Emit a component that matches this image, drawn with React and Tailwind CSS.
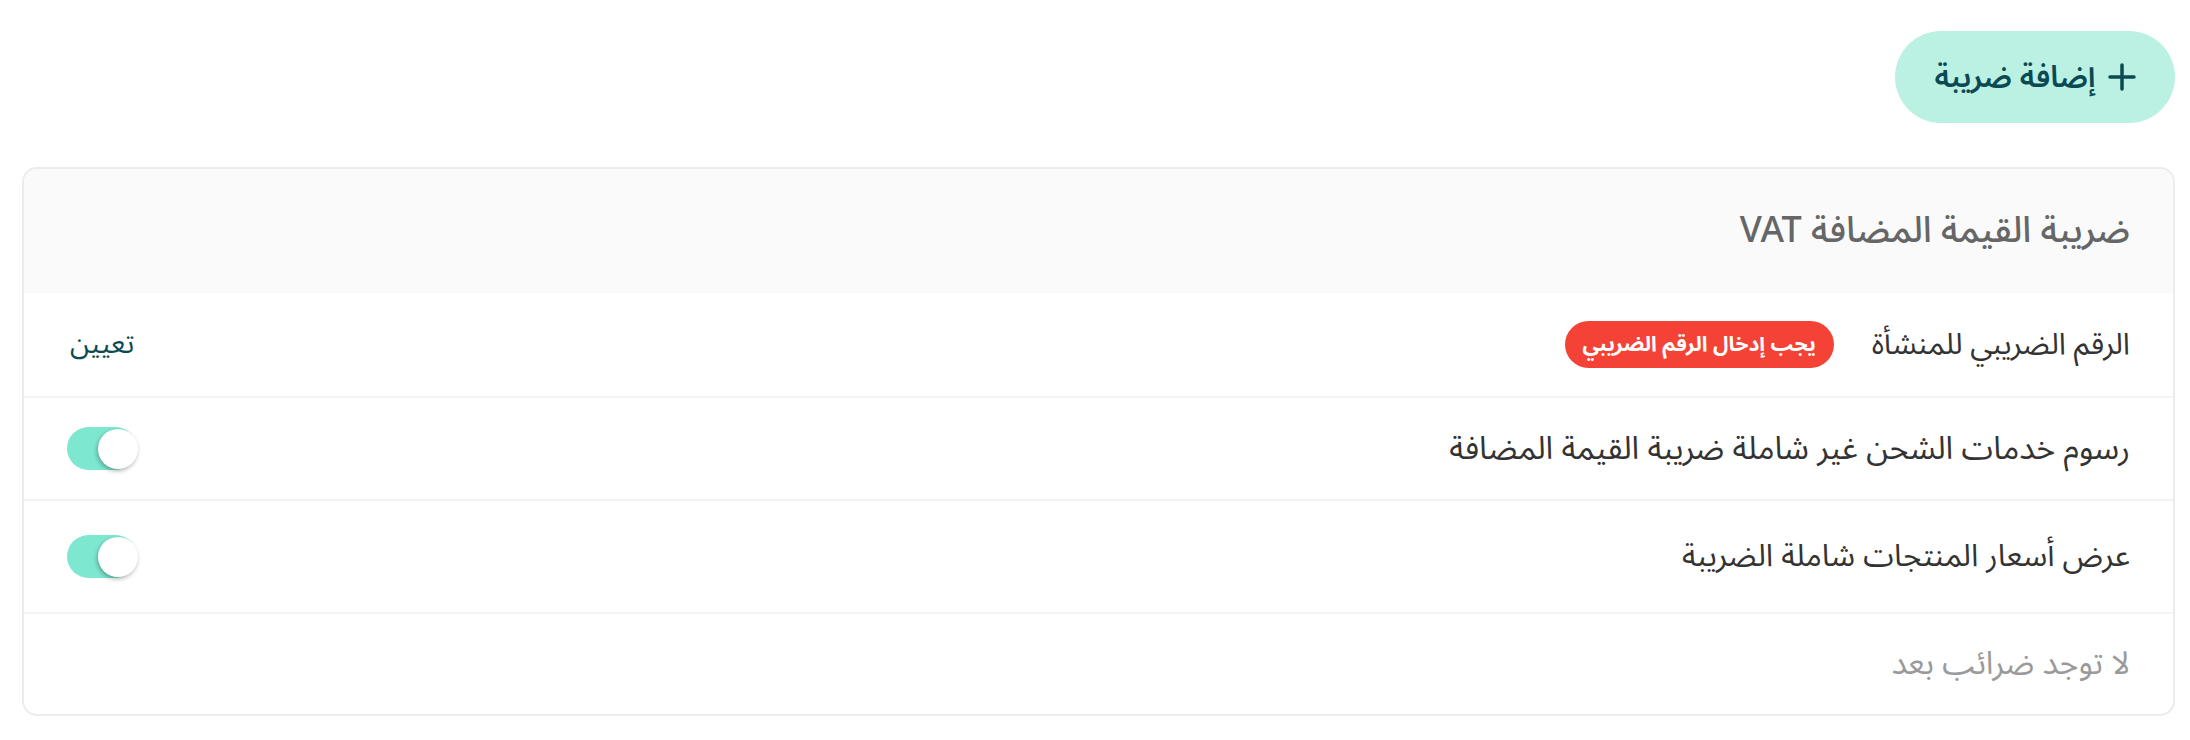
import React from 'react';

const font = { fontFamily: '"Noto Sans Arabic", "DejaVu Sans", "Noto Sans", sans-serif' };

const Toggle = () => (
  <div className="w-[70px] h-[43px] rounded-full bg-[#7de7cf] flex items-center justify-start">
    <span className="block w-[40px] h-[40px] rounded-full bg-white shadow-[-1px_2px_4px_rgba(0,0,0,0.3)] mr-[-1px]" />
  </div>
);

export default function App() {
  return (
    <div dir="rtl" className="bg-white min-h-[740px] pl-[22px] pr-[15px] pt-[31px]" style={font}>
      <div className="flex">
        <button className="h-[92px] w-[280px] rounded-full bg-[#baf1e3] text-[#0b4a53] flex items-center justify-center gap-[12px] text-[30px] font-semibold">
          <svg width="28" height="28" viewBox="0 0 28 28" fill="none" stroke="currentColor" strokeWidth="3.5" strokeLinecap="round">
            <path d="M14 2v24M2 14h24" />
          </svg>
          <span>إضافة ضريبة</span>
        </button>
      </div>

      <div className="mt-[44px] border-2 border-[#ececec] rounded-[15px] overflow-hidden">
        <div className="h-[124px] bg-[#fafafa] flex items-center px-[43px]">
          <h2 className="text-[36px] font-medium text-[#666]">ضريبة القيمة المضافة VAT</h2>
        </div>

        <div className="h-[105px] flex items-center justify-between px-[43px] border-b-2 border-[#f3f3f3]">
          <div className="flex items-center gap-[38px]">
            <span className="text-[30px] text-[#333]">الرقم الضريبي للمنشأة</span>
            <span className="h-[47px] px-[18px] rounded-full bg-[#f44336] text-white text-[21px] font-bold flex items-center">يجب إدخال الرقم الضريبي</span>
          </div>
          <span className="text-[28px] text-[#0b4a53] ml-[3px]">تعيين</span>
        </div>

        <div className="h-[103px] flex items-center justify-between px-[43px] border-b-2 border-[#f3f3f3]">
          <span className="text-[32px] text-[#333]">رسوم خدمات الشحن غير شاملة ضريبة القيمة المضافة</span>
          <Toggle />
        </div>

        <div className="h-[113px] flex items-center justify-between px-[43px] border-b-2 border-[#f3f3f3]">
          <span className="text-[31px] text-[#333]">عرض أسعار المنتجات شاملة الضريبة</span>
          <Toggle />
        </div>

        <div className="h-[100px] flex items-center px-[43px]">
          <span className="text-[32px] text-[#9a9a9a]">لا توجد ضرائب بعد</span>
        </div>
      </div>
    </div>
  );
}
